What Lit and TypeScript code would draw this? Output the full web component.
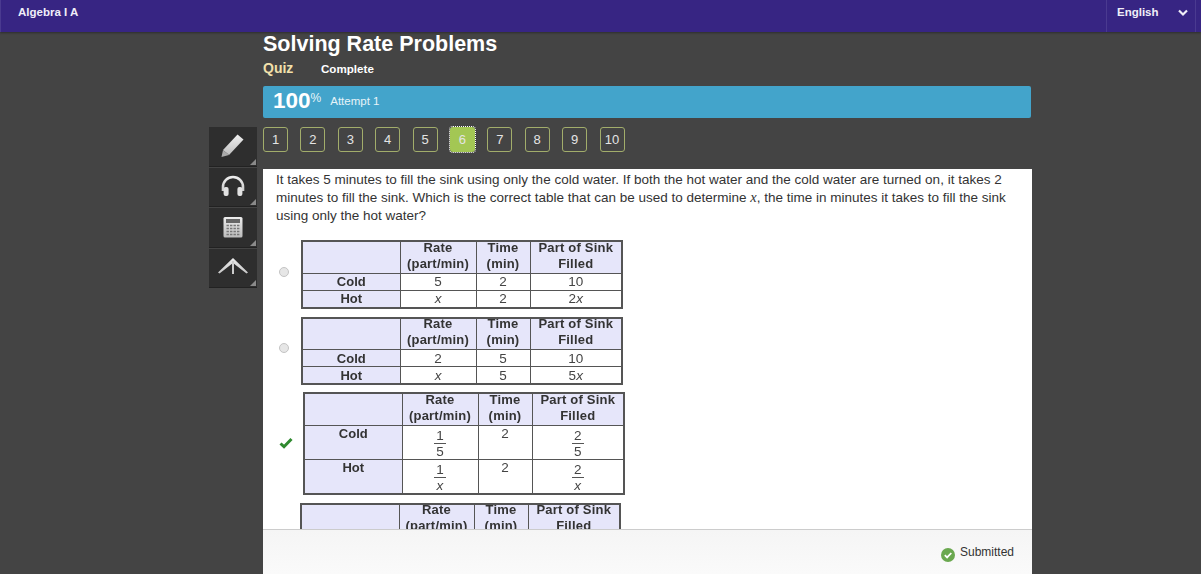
import { LitElement, html, css, svg } from "lit";
import { customElement } from "lit/decorators.js";

type Cell = string | { n: string; d: string };
interface Opt { cls: string; mark: "radio" | "check"; rows: Cell[][]; tall?: boolean }

const opts: Opt[] = [
  { cls: "o1", mark: "radio", rows: [["Cold", "5", "2", "10"], ["Hot", "x", "2", "2x"]] },
  { cls: "o2", mark: "radio", rows: [["Cold", "2", "5", "10"], ["Hot", "x", "5", "5x"]] },
  { cls: "o3", mark: "check", tall: true, rows: [
    ["Cold", { n: "1", d: "5" }, "2", { n: "2", d: "5" }],
    ["Hot", { n: "1", d: "x" }, "2", { n: "2", d: "x" }],
  ] },
  { cls: "o4", mark: "radio", rows: [["Cold", "1", "2", "10"], ["Hot", "x", "2", "2x"]] },
];

const ital = (s: string) => {
  if (s.endsWith("x")) return html`${s.slice(0, -1)}<i>x</i>`;
  return s;
};

@customElement("app-root")
export class AppRoot extends LitElement {
  static styles = css`
    :host { display: block; height: 574px; overflow: hidden; background: #444; font-family: "Liberation Sans", Arial, sans-serif; color: #fff; }
    .head { height: 32px; box-sizing: border-box; background: #372583; box-shadow: 0 1px 2px rgba(0,0,0,.35); display: flex; align-items: flex-start; justify-content: space-between; font-size: 11.5px; font-weight: bold; color: #f0eef8; position: relative; }
    .course { padding: 5px 0 0 17px; line-height: 15px; border-left: 1px solid #4a3a90; height: 27px; }
    .lang { width: 90px; height: 32px; box-sizing: border-box; margin-right: 5px; display: flex; border-left: 1px solid #4a3a90; border-right: 1px solid #4a3a90; padding: 5px 0 0 10px; line-height: 15px; }
    .lang span { width: 61px; }
    .lang svg { margin-top: 4px; }
    .grid { display: grid; grid-template-columns: 48px 769px; column-gap: 6px; margin-left: 209px; }
    .title { grid-column: 2; }
    h1 { margin: 0; font-size: 21.5px; line-height: 24px; font-weight: bold; color: #fff; }
    .sub { display: flex; align-items: baseline; margin-top: 3px; height: 24px; line-height: 18px; }
    .quiz { font-size: 14px; font-weight: bold; color: #f2e0ab; width: 58px; }
    .state { font-size: 11.6px; font-weight: bold; color: #fff; }
    .bar { width: 768px; height: 32px; margin-top: 3px; background: #43a4cb; border-radius: 2px; display: flex; align-items: flex-start; padding-left: 10px; box-sizing: border-box; }
    .pct { font-size: 22.5px; font-weight: bold; line-height: 30px; }
    .sign { font-size: 12px; line-height: 24px; font-weight: normal; color: #e8f4f9; }
    .att { font-size: 11.5px; line-height: 30px; margin-left: 9px; color: #e6f3f8; }
    .rail { display: flex; flex-direction: column; gap: 1px; margin-top: 9px; }
    .tool { height: 39.5px; box-sizing: border-box; background: #2e2e2e; border-bottom: 1px solid #222; display: flex; align-items: center; justify-content: center; position: relative; }
    .tool::after { content: ""; position: absolute; right: 1px; bottom: 1px; border-style: solid; border-width: 0 0 6px 6px; border-color: transparent transparent #8a8a8a transparent; }
    .right { margin-top: 9px; }
    .nav { display: flex; gap: 12.4px; height: 25px; }
    .nav div { width: 25px; height: 25px; box-sizing: border-box; border: 1px solid #a2ad6b; border-radius: 3px; font-size: 13px; color: #e4e4e4; display: flex; align-items: center; justify-content: center; }
    .nav .on { background: #a3c754; border: none; outline: 1px dotted #fff; }
    .panel { margin-top: 17px; height: 360px; overflow: hidden; background: #fff; color: #333; box-sizing: border-box; padding: 2px 12px 0 13px; }
    .q { font-size: 13.5px; line-height: 18px; color: #333; width: 740px; }
    .q i { font-family: "Liberation Serif", serif; font-size: 14.5px; line-height: 0; }
    .opt { display: flex; align-items: center; margin-left: 3px; }
    .o1 { margin-top: 15px; }
    .o2 { margin-top: 8px; }
    .o3 { margin-top: 7px; }
    .o4 { margin-top: 8px; }
    .mark { width: 22px; flex: none; display: flex; }
    .o3 .mark { width: 24px; }
    .o4 .mark { width: 21px; }
    .radio { width: 10px; height: 10px; margin-top: -5px; border-radius: 50%; box-sizing: border-box; border: 1px solid #c4c4c4; background: #e6e6e6; }
    table { border-collapse: collapse; table-layout: fixed; border: 2px solid #555; font-size: 13.5px; line-height: 16px; color: #444; text-align: center; filter: blur(.3px); }
    td, th { border: 1px solid #555; padding: 0; font-weight: normal; }
    th { background: #e6e6fa; font-weight: bold; color: #333; font-size: 13px; }
    .h1 th { letter-spacing: .2px; }
    .hc { margin: -2.5px 0 1px; }
    .w1 { width: 98px; } .w2 { width: 76px; } .w3 { width: 54px; } .w4 { width: 92px; }
    .o4 .w2 { width: 75px; }
    tr.r td, tr.r th { height: 16px; line-height: 15px; }
    .tall tr.r td, .tall tr.r th { height: 33px; vertical-align: top; }
    .frac { display: inline-flex; flex-direction: column; align-items: center; line-height: 15px; font-size: 13.5px; padding-top: 2px; }
    .frac b { font-weight: normal; padding: 0 2px; border-bottom: 1px solid #555; }
    .foot { margin-left: 263px; width: 769px; height: 45px; box-sizing: border-box; border-top: 1px solid #ccc; background: linear-gradient(#f5f5f5, #fafafa); color: #333; font-size: 12px; display: flex; justify-content: flex-end; padding: 14px 18px 0 0; line-height: 16px; }
    .foot svg { margin: 4px 5px 0 0; }
  `;

  private tools() {
    return [
      svg`<path d="M17.5 1.5l6 5L9 22l-6-5z" fill="url(#g)"/><path d="M3 17l6 5-7.5 2z" fill="#aaa"/>`,
      svg`<path d="M3 17v-4a10 10 0 0 1 20 0v4" fill="none" stroke="url(#g)" stroke-width="2.6"/><rect x="3.6" y="13" width="5" height="9" rx="2" fill="#e2e2e2"/><rect x="17.4" y="13" width="5" height="9" rx="2" fill="#e2e2e2"/>`,
      svg`<rect x="3.5" y="3" width="19" height="20.5" rx="1.5" fill="url(#g)"/><rect x="6" y="5" width="14" height="4" fill="#666"/><path d="M6.5 11.5h13M6.5 14.5h13M6.5 17.5h13M6.5 20.5h13" stroke="#777" stroke-width="1.7" stroke-dasharray="2.4 1.1"/>`,
      svg`<path d="M-2 17.5L13 3l15 14.5-1.5 1L13 8 -.5 18.5z" fill="url(#g)"/><rect x="12" y="6" width="2" height="13" fill="#ccc"/>`,
    ].map((p) => html`<div class="tool"><svg width="26" height="26" viewBox="0 0 26 26" style="overflow:visible"><defs><linearGradient id="g" gradientUnits="userSpaceOnUse" x1="0" y1="0" x2="0" y2="26"><stop offset="0" stop-color="#f4f4f4"/><stop offset="1" stop-color="#b5b5b5"/></linearGradient></defs>${p}</svg></div>`);
  }

  private cell(c: Cell) {
    if (typeof c === "string") return ital(c);
    return html`<span class="frac"><b>${c.n}</b><span>${ital(c.d)}</span></span>`;
  }

  private table(o: Opt) {
    return html`<table class=${o.tall ? "tall" : ""}>
      <colgroup><col class="w1"/><col class="w2"/><col class="w3"/><col class="w4"/></colgroup>
      <tr class="h1"><th></th><th><div class="hc">Rate<br/>(part/min)</div></th><th><div class="hc">Time<br/>(min)</div></th><th><div class="hc">Part of Sink<br/>Filled</div></th></tr>
      ${o.rows.map((r) => html`<tr class="r"><th>${r[0]}</th>${r.slice(1).map((c) => html`<td>${this.cell(c)}</td>`)}</tr>`)}
    </table>`;
  }

  render() {
    return html`
      <div class="head">
        <div class="course">Algebra I A</div>
        <div class="lang"><span>English</span>
          <svg width="10" height="8" viewBox="0 0 10 8"><path d="M1 1.5l4 4 4-4" fill="none" stroke="#f0eef8" stroke-width="2.2"/></svg>
        </div>
      </div>
      <div class="grid">
        <div class="title">
          <h1>Solving Rate Problems</h1>
          <div class="sub"><span class="quiz">Quiz</span><span class="state">Complete</span></div>
          <div class="bar"><span class="pct">100</span><span class="sign">%</span><span class="att">Attempt 1</span></div>
        </div>
        <div class="rail">${this.tools()}</div>
        <div class="right">
          <div class="nav">${[1,2,3,4,5,6,7,8,9,10].map((n) => html`<div class=${n === 6 ? "on" : ""}>${n}</div>`)}</div>
          <div class="panel">
            <div class="q">It takes 5 minutes to fill the sink using only the cold water. If both the hot water and the cold water are turned on, it takes 2 minutes to fill the sink. Which is the correct table that can be used to determine <i>x</i>, the time in minutes it takes to fill the sink using only the hot water?</div>
            ${opts.map((o) => html`<div class="opt ${o.cls}">
              <div class="mark">${o.mark === "radio" ? html`<div class="radio"></div>` : html`<svg width="14" height="12" viewBox="0 0 14 12"><path d="M1.5 6.5l3.5 3.2L12.5 2" fill="none" stroke="#2f8a2f" stroke-width="3"/></svg>`}</div>
              ${this.table(o)}
            </div>`)}
          </div>
        </div>
      </div>
      <div class="foot">
        <svg width="14" height="14" viewBox="0 0 14 14"><circle cx="7" cy="7" r="7" fill="#6aa84f"/><path d="M3.8 7.2l2.3 2.2 4.2-4.4" fill="none" stroke="#fff" stroke-width="1.8"/></svg>
        <span>Submitted</span>
      </div>
    `;
  }
}
